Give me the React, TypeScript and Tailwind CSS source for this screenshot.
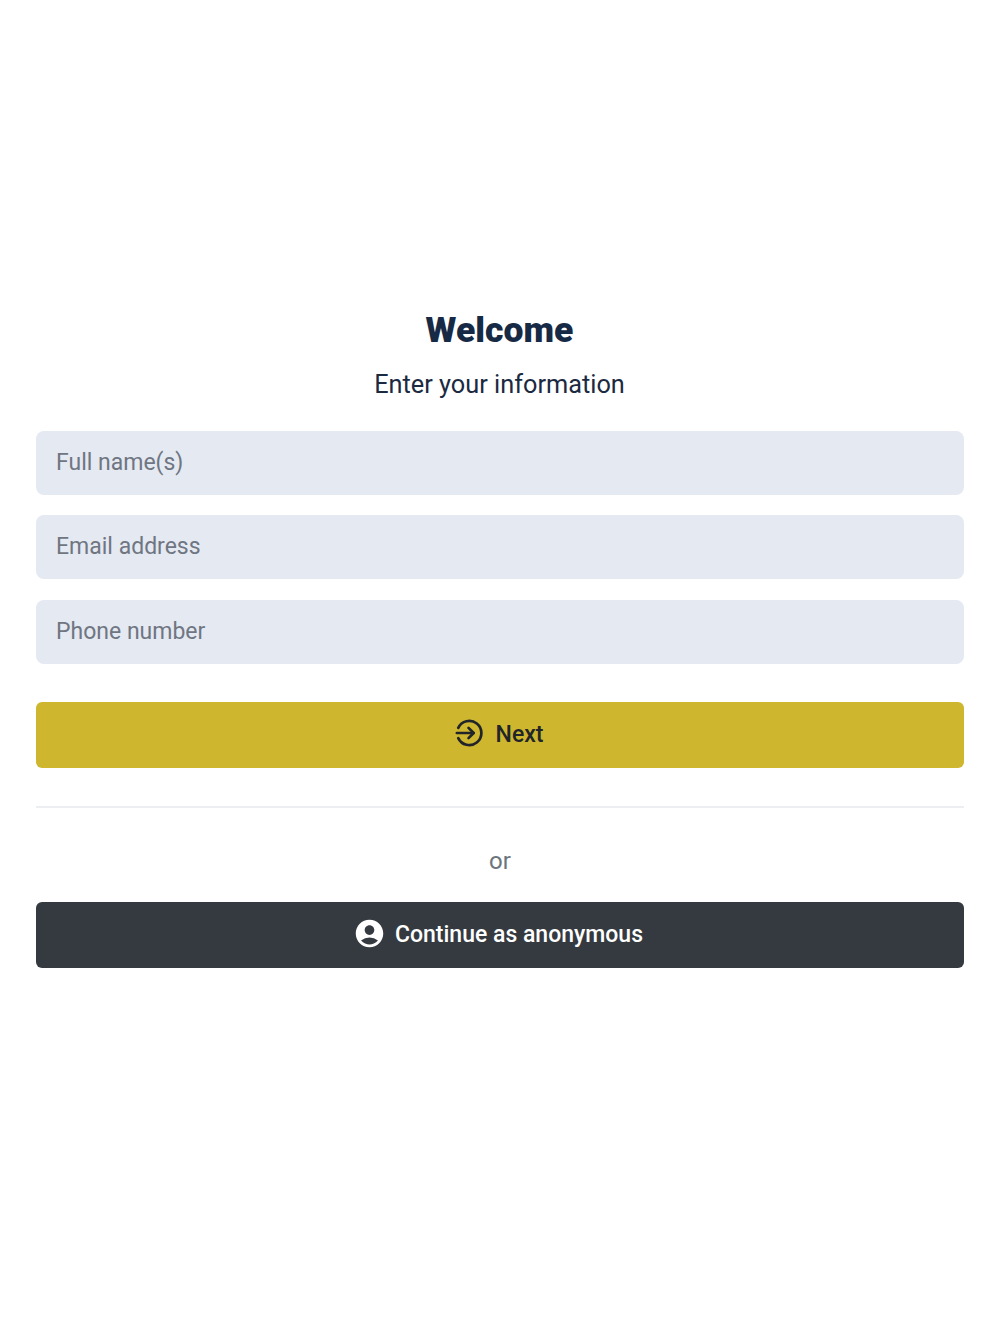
import { MdAccountCircle } from 'react-icons/md';

const fields = ['Full name(s)', 'Email address', 'Phone number'];

export default function App() {
  return (
    <div className="min-h-[1334px] bg-white px-9 pt-[308px] font-['Roboto',sans-serif]">
      <h1 className="pr-[1px] text-center text-[35.5px] leading-[44px] font-black text-[#172a45]">Welcome</h1>
      <p className="mt-[17px] pr-[1px] text-center text-[25.3px] leading-[32px] text-[#1b2a41]">Enter your information</p>

      <form className="mt-[30px] flex flex-col gap-[20.4px]">
        {fields.map((field) => (
          <input
            key={field}
            type="text"
            placeholder={field}
            className="h-[64px] w-full rounded-lg bg-[#e5e9f2] px-5 pb-[1px] text-[23px] text-[#1b2a41] outline-none placeholder:text-[#6f7682]"
          />
        ))}
      </form>

      <button className="mt-[38px] flex h-[66.500px] w-full items-center justify-center gap-[13px] rounded-md bg-[#ceb62f] pr-[2px] text-[23px] font-medium text-[#212529]">
        <svg width="28" height="28" viewBox="0 0 30 30" fill="none" stroke="currentColor" strokeWidth="2.9" strokeLinecap="round" strokeLinejoin="round" className="-mt-[5px]">
          <path d="M3.500 9.500A13 13 0 1 1 3.500 20.500" />
          <path d="M2 15h18" />
          <path d="M14.500 9.500 20 15l-5.500 5.500" />
        </svg>
        Next
      </button>

      <div className="mt-[38px] border-t-2 border-[#edeef2]" />
      <p className="mt-[37px] text-center text-[24px] leading-[32px] text-[#6c757d]">or</p>

      <button className="mt-[25px] flex h-[66px] w-full items-center justify-center gap-[9px] rounded-md bg-[#343a40] pr-1 text-[23px] font-medium text-white">
        <MdAccountCircle className="-mt-[4px] size-[33px]" />
        Continue as anonymous
      </button>
    </div>
  );
}
